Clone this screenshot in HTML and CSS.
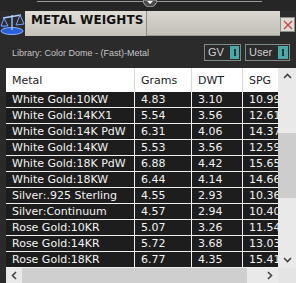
FILE: index.html
```html
<!DOCTYPE html>
<html lang="en">
<head>
<meta charset="UTF-8">
<title>Metal Weights</title>
<link rel="stylesheet" href="styles.css">
</head>
<body>

<div class="topbar">
  <div class="rail"></div>
  <div class="knob">
    <svg width="14" height="7" viewBox="0 0 14 7"><path d="M0 0 A7 7 0 0 0 14 0 Z" fill="#4a4a4a" stroke="#aaa" stroke-width="1"/><path d="M4 1 L10 1 L7 4 Z" fill="#fff"/></svg>
  </div>
</div>

<div class="titlebar">
  <div class="app-icon">
    <svg width="25" height="25" viewBox="0 0 25 25">
      <ellipse cx="12" cy="20" rx="11" ry="3.5" fill="#2a5fd8" stroke="#8fb4ff" stroke-width="1"/>
      <path d="M12 4 L12 19" stroke="#9cc0ff" stroke-width="1.4"/>
      <path d="M3 7 L21 4" stroke="#b8d2ff" stroke-width="1.4"/>
      <path d="M4 7 L1 15 L8 15 Z" fill="none" stroke="#7aa6ff" stroke-width="1"/>
      <path d="M20 4 L16 14 L24 13 Z" fill="none" stroke="#7aa6ff" stroke-width="1"/>
      <path d="M1 15 Q4.5 18 8 15" fill="#3d73e8"/>
    </svg>
  </div>
  <div class="title-tab">METAL WEIGHTS</div>
  <div class="title-fill"></div>
  <div class="close-btn">
    <svg width="10" height="10" viewBox="0 0 10 10"><path d="M1 1 L9 9 M9 1 L1 9" stroke="#c94040" stroke-width="1.2"/></svg>
  </div>
</div>

<div class="library">
  <span class="library-name">Library: Color Dome - (Fast)-Metal</span>
  <div class="toggles">
    <div class="toggle"><span>GV</span><i class="switch"></i></div>
    <div class="toggle"><span>User</span><i class="switch"></i></div>
  </div>
</div>

<div class="grid">
  <div class="grid-main">
    <div class="table-view">
      <table class="weights">
        <colgroup>
          <col class="c-metal"><col class="c-grams"><col class="c-dwt"><col class="c-spg">
        </colgroup>
        <thead>
          <tr><th>Metal</th><th>Grams</th><th>DWT</th><th>SPG</th></tr>
        </thead>
        <tbody>
          <tr><td>White Gold:10KW</td><td>4.83</td><td>3.10</td><td>10.99</td></tr>
          <tr><td>White Gold:14KX1</td><td>5.54</td><td>3.56</td><td>12.61</td></tr>
          <tr><td>White Gold:14K PdW</td><td>6.31</td><td>4.06</td><td>14.37</td></tr>
          <tr><td>White Gold:14KW</td><td>5.53</td><td>3.56</td><td>12.59</td></tr>
          <tr><td>White Gold:18K PdW</td><td>6.88</td><td>4.42</td><td>15.65</td></tr>
          <tr><td>White Gold:18KW</td><td>6.44</td><td>4.14</td><td>14.66</td></tr>
          <tr><td>Silver:.925 Sterling</td><td>4.55</td><td>2.93</td><td>10.36</td></tr>
          <tr><td>Silver:Continuum</td><td>4.57</td><td>2.94</td><td>10.40</td></tr>
          <tr><td>Rose Gold:10KR</td><td>5.07</td><td>3.26</td><td>11.54</td></tr>
          <tr><td>Rose Gold:14KR</td><td>5.72</td><td>3.68</td><td>13.03</td></tr>
          <tr><td>Rose Gold:18KR</td><td>6.77</td><td>4.35</td><td>15.41</td></tr>
        </tbody>
      </table>
    </div>
    <div class="vscroll">
      <div class="arrow up">
        <svg width="9" height="6" viewBox="0 0 9 6"><path d="M1 5 L4.5 1.5 L8 5" fill="none" stroke="#444" stroke-width="1.6"/></svg>
      </div>
      <div class="vtrack"><div class="vthumb"></div></div>
      <div class="arrow down">
        <svg width="9" height="6" viewBox="0 0 9 6"><path d="M1 1 L4.5 4.5 L8 1" fill="none" stroke="#444" stroke-width="1.6"/></svg>
      </div>
    </div>
  </div>
  <div class="hscroll">
    <div class="arrow left">
      <svg width="6" height="9" viewBox="0 0 6 9"><path d="M5 1 L1.5 4.5 L5 8" fill="none" stroke="#444" stroke-width="1.6"/></svg>
    </div>
    <div class="htrack"><div class="hthumb"></div></div>
    <div class="arrow right">
      <svg width="6" height="9" viewBox="0 0 6 9"><path d="M1 1 L4.5 4.5 L1 8" fill="none" stroke="#444" stroke-width="1.6"/></svg>
    </div>
    <div class="corner"></div>
  </div>
</div>

</body>
</html>
```

FILE: styles.css
```css
body {
  margin: 0;
  width: 296px;
  height: 283px;
  overflow: hidden;
  background: #2b2b2b;
  font-family: "DejaVu Sans", Verdana, sans-serif;
}

/* strip above the title */
.topbar {
  height: 11px;
  position: relative;
  background: #262626;
}

.rail {
  position: absolute;
  left: 37px;
  top: 1px;
  width: 225px;
  height: 1px;
  background: #9a9a9a;
}

.knob {
  position: absolute;
  left: 143px;
  top: 0;
  line-height: 0;
}

.titlebar {
  display: flex;
  height: 25px;
  background: #2b2b2b;
}

.app-icon {
  width: 25px;
  line-height: 0;
}

.title-tab {
  width: 115px;
  padding-left: 6px;
  padding-top: 2px;
  background: linear-gradient(#e0ded7, #c4c1b8);
  border-right: 1px solid #8e8b84;
  font-size: 12px;
  font-weight: bold;
  letter-spacing: 0.1px;
  color: #111;
}

.title-fill {
  flex: 1;
  background: linear-gradient(#d9d7d0, #c2bfb6);
  border-bottom: 1px solid #9a978f;
}

.close-btn {
  width: 13px;
  height: 13px;
  margin-top: 6px;
  margin-right: 1px;
  display: flex;
  align-items: center;
  justify-content: center;
  background: #dedbd4;
  border: 1px solid #8f8d88;
}

.library {
  display: flex;
  align-items: center;
  justify-content: space-between;
  height: 32px;
  padding: 0 6px 0 12px;
}

.library-name {
  font-family: "Liberation Sans", Arial, sans-serif;
  font-size: 9px;
  color: #c6c6c6;
  margin-top: 1px;
}

.toggles {
  display: flex;
  gap: 4px;
}

.toggle {
  display: flex;
  align-items: center;
  justify-content: space-between;
  height: 15px;
  padding: 0 1px 0 3px;
  border: 1px solid #7f8a8a;
  font-family: "Liberation Sans", Arial, sans-serif;
  font-size: 11px;
  color: #d0d0d0;
  gap: 6px;
}

.toggle:first-child {
  width: 31px;
}

.toggle:last-child {
  width: 39px;
}

.switch {
  width: 11px;
  height: 13px;
  background: #4aa8a8;
  position: relative;
}

.switch::after {
  content: "";
  position: absolute;
  left: 4px;
  top: 3px;
  width: 2px;
  height: 7px;
  background: #1d3a3a;
}

/* grid */
.grid {
  margin-left: 6px;
  width: 290px;
}

.grid-main {
  display: flex;
  height: 200px;
}

.table-view {
  width: 272px;
  overflow: hidden;
}

.weights {
  table-layout: fixed;
  width: 300px;
  border-collapse: separate;
  border-spacing: 0;
  font-size: 11px;
}

.c-metal { width: 129px; }
.c-grams { width: 57px; }
.c-dwt { width: 51px; }
.c-spg { width: 63px; }

.weights th {
  height: 24px;
  padding: 0 0 0 6px;
  background: #fff;
  color: #222;
  font-weight: normal;
  text-align: left;
  border-right: 1px solid #d8d8d8;
  white-space: nowrap;
  overflow: hidden;
}

.weights td {
  height: 15px;
  padding: 0 0 0 6px;
  background: #1d1d1d;
  color: #f2f2f2;
  border-right: 1px solid #f0f0f0;
  border-bottom: 1px solid #f0f0f0;
  white-space: nowrap;
  overflow: hidden;
  line-height: 15px;
}

.vscroll {
  width: 18px;
  display: flex;
  flex-direction: column;
  background: #e9e9e9;
}

.arrow {
  display: flex;
  align-items: center;
  justify-content: center;
}

.arrow.up,
.arrow.down {
  height: 16px;
}

.vtrack {
  flex: 1;
  padding-top: 49px;
}

.vthumb {
  height: 65px;
  background: #cdcdcd;
}

.hscroll {
  display: flex;
  height: 15px;
  background: #e9e9e9;
}

.arrow.left,
.arrow.right {
  width: 16px;
}

.htrack {
  width: 240px;
}

.hthumb {
  width: 225px;
  height: 15px;
  background: #cfcfcf;
}

.corner {
  width: 18px;
  background: #e4e4e4;
}
```
